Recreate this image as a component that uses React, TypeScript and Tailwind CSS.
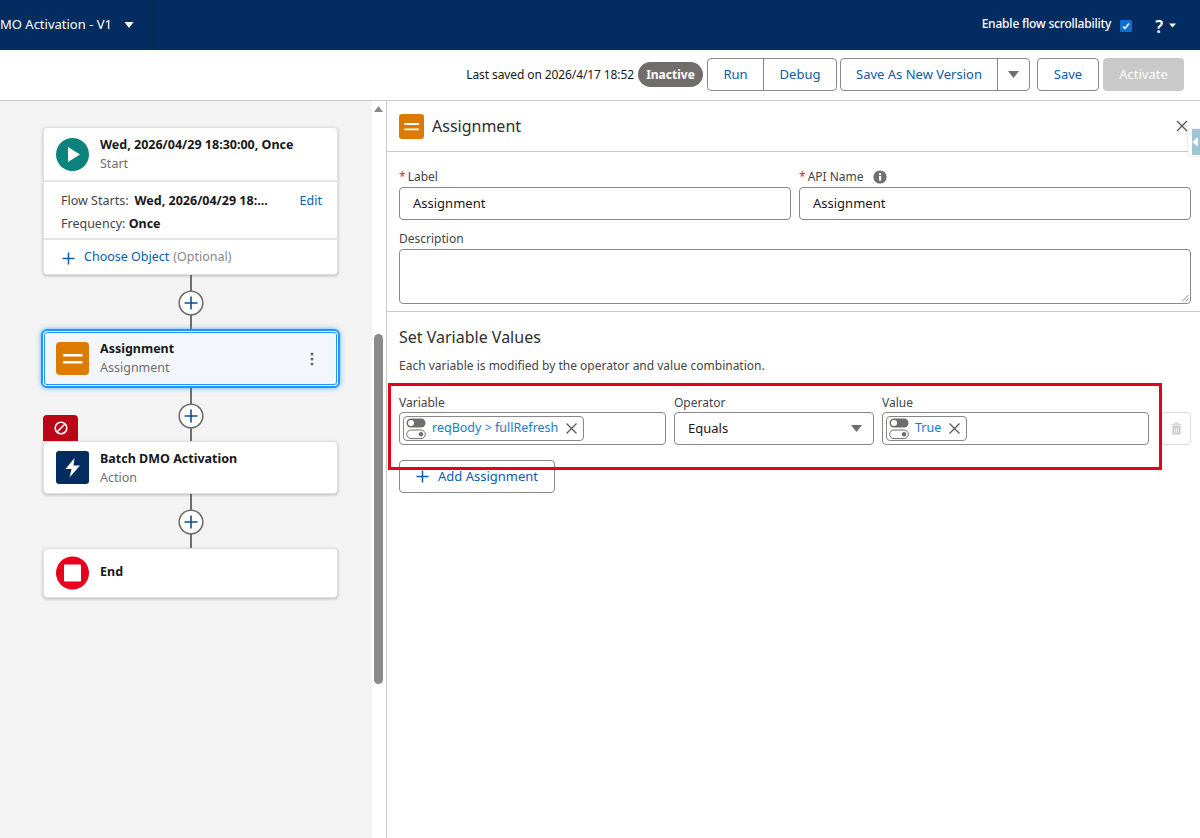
import React from "react";

const font = { fontFamily: '"Noto Sans", "Open Sans", sans-serif' };

function AssignIcon({ size = 33 }: { size?: number }) {
  return (
    <svg width={size} height={size} viewBox="0 0 33 33" className="shrink-0">
      <rect width="33" height="33" rx="4" fill="#dd7a01" />
      <rect x="7" y="12" width="19.5" height="2.6" rx="0.6" fill="#fff" />
      <rect x="7" y="19" width="19.5" height="2.6" rx="0.6" fill="#fff" />
    </svg>
  );
}

function PlusNode() {
  return (
    <div className="flex flex-col items-center w-[295px]">
      <div className="w-[2px] h-[16px] bg-[#706e6b]" />
      <svg width="26" height="26" viewBox="0 0 26 26" className="-my-[1px] shrink-0">
        <circle cx="13" cy="13" r="11.8" fill="#fff" stroke="#706e6b" strokeWidth="1.6" />
        <path d="M13 6.5v13M6.5 13h13" stroke="#0b4f8f" strokeWidth="1.6" />
      </svg>
      <div className="w-[2px] h-[14px] bg-[#706e6b]" />
    </div>
  );
}

function Toggle() {
  return (
    <svg width="20" height="22" viewBox="0 0 20 22" className="shrink-0">
      <rect x="0.5" y="0.5" width="19" height="9" rx="4.5" fill="#706e6b" />
      <circle cx="5" cy="5" r="3" fill="#fff" />
      <rect x="0.7" y="12" width="18.6" height="8.6" rx="4.3" fill="#fff" stroke="#706e6b" />
      <circle cx="15" cy="16.3" r="2.2" fill="#706e6b" />
    </svg>
  );
}

function Pill({ text }: { text: string }) {
  return (
    <div className="h-[25px] ml-[3px] flex items-center pl-[2px] pr-[5px] border border-[#8a8886] rounded-[4px] bg-white">
      <Toggle />
      <span className="ml-[6px] text-[12.5px] text-[#1b7bc4] whitespace-nowrap">{text}</span>
      <svg width="13" height="13" viewBox="0 0 13 13" className="ml-[7px]">
        <path d="M1.5 1.5l10 10M11.5 1.5l-10 10" stroke="#605e5c" strokeWidth="1.4" />
      </svg>
    </div>
  );
}

function Field({ label, required, info, cls }: { label: string; required?: boolean; info?: boolean; cls: string }) {
  return (
    <div className={cls}>
      <div className="h-[20px] flex items-center text-[12px] text-[#444]">
        {required && <span className="text-[#c23934] mr-[2px]">*</span>}
        {label}
        {info && (
          <svg width="14" height="14" viewBox="0 0 14 14" className="ml-[9px]">
            <circle cx="7" cy="7" r="6.6" fill="#706e6b" />
            <rect x="6" y="6" width="2.2" height="4.6" fill="#fff" />
            <rect x="6" y="3.2" width="2.2" height="1.9" fill="#fff" />
          </svg>
        )}
      </div>
      <div className="h-[33px] rounded-[4px] border border-[#8a8886] flex items-center pl-[13px] text-[13px] text-[#181818] bg-white">
        Assignment
      </div>
    </div>
  );
}

export default function App() {
  return (
    <div className="relative w-[1200px] h-[838px] overflow-hidden bg-white" style={font}>
      {/* Top bar */}
      <header className="h-[50px] bg-[#032d60] flex items-center text-white">
        <div className="w-[154px] h-full flex items-center justify-end border-r border-[#02234c] pr-[19px] overflow-hidden">
          <span className="text-[13px] whitespace-nowrap">MO Activation - V1</span>
          <svg width="12" height="8" viewBox="0 0 12 8" className="ml-[12px]">
            <path d="M0.5 0.5h11L6 7.5z" fill="#fff" />
          </svg>
        </div>
        <div className="flex-1" />
        <span className="text-[12px] font-medium whitespace-nowrap mb-[2px] tracking-[-0.2px]">Enable flow scrollability</span>
        <div className="ml-[9px] w-[12px] h-[12px] mt-[2px] bg-[#0d6fd1] rounded-[1px] flex items-center justify-center">
          <svg width="10" height="10" viewBox="0 0 10 10">
            <path d="M2 5.5l2 2 4-5" fill="none" stroke="#fff" strokeWidth="1.5" />
          </svg>
        </div>
        <span className="ml-[23px] text-[17px] font-semibold leading-none mt-[2px]">?</span>
        <svg width="7" height="5" viewBox="0 0 7 5" className="ml-[6px] mr-[24px]">
          <path d="M0 0.5h7L3.5 4.5z" fill="#fff" />
        </svg>
      </header>

      {/* Toolbar */}
      <div className="h-[51px] border-b border-[#c9c9c9] flex items-center justify-end pr-[16px] gap-[3px] pb-[1px]">
        <span className="text-[12px] text-[#181818] whitespace-nowrap mr-[1px] tracking-[-0.1px]">Last saved on 2026/4/17 18:52</span>
        <span className="h-[25px] w-[65px] rounded-full bg-[#706e6b] text-white text-[12px] font-bold flex items-center justify-center">Inactive</span>
        <div className="h-[33px] flex border border-[#8a8886] rounded-[4px] text-[13px] text-[#0b5cab] ml-[1px]">
          <span className="w-[56px] flex items-center justify-center border-r border-[#8a8886]">Run</span>
          <span className="w-[72px] flex items-center justify-center">Debug</span>
        </div>
        <div className="h-[33px] flex border border-[#8a8886] rounded-[4px] text-[13px] text-[#0b5cab] ml-[0px] mx-[2px]">
          <span className="w-[157px] flex items-center justify-center border-r border-[#8a8886]">Save As New Version</span>
          <span className="w-[31px] flex items-center justify-center">
            <svg width="11" height="7" viewBox="0 0 11 7"><path d="M0 0h11L5.500 7z" fill="#706e6b" /></svg>
          </span>
        </div>
        <span className="h-[33px] w-[62px] ml-[2px] border border-[#8a8886] rounded-[4px] text-[13px] text-[#0b5cab] flex items-center justify-center">Save</span>
        <span className="h-[33px] w-[81px] ml-[1px] rounded-[4px] bg-[#c9c9c9] text-[13px] text-white flex items-center justify-center">Activate</span>
      </div>

      <div className="flex h-[737px]">
        {/* Canvas */}
        <div className="w-[372px] bg-[#f3f3f3] pl-[43px] pt-[26px] shrink-0">
          <div className="w-[295px] h-[148px] bg-white rounded-[4px] border border-[#e0e0e0] shadow-[0_1px_3px_rgba(0,0,0,0.25)]">
            <div className="h-[54px] flex items-center pl-[12px] border-b-2 border-[#e5e5e5]">
              <svg width="33" height="33" viewBox="0 0 33 33" className="shrink-0">
                <circle cx="16.500" cy="16.500" r="16.500" fill="#0b827c" />
                <path d="M12 9l12 7.500-12 7.500z" fill="#fff" />
              </svg>
              <div className="ml-[11px]">
                <div className="text-[12.5px] font-bold text-[#181818] leading-[19px] whitespace-nowrap">Wed, 2026/04/29 18:30:00, Once</div>
                <div className="text-[12.500px] text-[#706e6b] leading-[19px]">Start</div>
              </div>
            </div>
            <div className="h-[58px] border-b-2 border-[#e5e5e5] pl-[17px] pr-[15px] pt-[8px] text-[12.5px] text-[#444]">
              <div className="flex leading-[22px] whitespace-nowrap">
                <span>Flow Starts:</span>
                <span className="ml-[6px] font-bold text-[#181818]">Wed, 2026/04/29 18:...</span>
                <span className="ml-auto text-[#0b5cab]">Edit</span>
              </div>
              <div className="leading-[23px] whitespace-nowrap">
                Frequency: <span className="font-bold text-[#181818]">Once</span>
              </div>
            </div>
            <div className="h-[34px] flex items-center pl-[18px] text-[12.5px]">
              <svg width="13" height="13" viewBox="0 0 13 13" className="mt-[2px]">
                <path d="M6.500 0.500v12M0.500 6.500h12" stroke="#0b5cab" strokeWidth="1.5" />
              </svg>
              <span className="ml-[9px] text-[#0b5cab]">Choose Object</span>
              <span className="ml-[4px] text-[#8a8886]">(Optional)</span>
            </div>
          </div>

          <PlusNode />

          <div className="w-[299px] -ml-[2px] h-[59px] rounded-[6px] border-2 border-[#1b96ff] p-[1px] shadow-[0_0_5px_rgba(27,150,255,0.7)] bg-white">
            <div className="h-full rounded-[3px] border border-[#1b96ff] bg-[#f3f6fb] flex items-center pl-[11px] pr-[22px]">
              <AssignIcon />
              <div className="ml-[11px] flex-1">
                <div className="text-[12.5px] font-bold text-[#181818] leading-[18px]">Assignment</div>
                <div className="text-[12.5px] text-[#706e6b] leading-[19px]">Assignment</div>
              </div>
              <svg width="4" height="14" viewBox="0 0 4 14">
                <circle cx="2" cy="2" r="1.500" fill="#706e6b" />
                <circle cx="2" cy="7" r="1.500" fill="#706e6b" />
                <circle cx="2" cy="12" r="1.500" fill="#706e6b" />
              </svg>
            </div>
          </div>

          <PlusNode />

          <div className="relative w-[295px] h-[53px] bg-white rounded-[4px] border border-[#e0e0e0] shadow-[0_1px_3px_rgba(0,0,0,0.25)] flex items-center pl-[12px] -mt-[1px]">
            <div className="absolute -top-[27px] -left-[1px] w-[35px] h-[26px] bg-[#ba0517] rounded-t-[4px] flex items-start justify-center pt-[6px]">
              <svg width="14" height="14" viewBox="0 0 14 14">
                <circle cx="7" cy="7" r="5.800" fill="none" stroke="#fff" strokeWidth="1.600" />
                <path d="M3 11L11 3" stroke="#fff" strokeWidth="1.600" />
              </svg>
            </div>
            <svg width="33" height="33" viewBox="0 0 33 33" className="shrink-0">
              <rect width="33" height="33" rx="3" fill="#032d60" />
              <path d="M18.500 7L9.500 18h6l-2 8.500L24 14.500h-6.500z" fill="#fff" />
            </svg>
            <div className="ml-[11px]">
              <div className="text-[12.5px] font-bold text-[#181818] leading-[19px]">Batch DMO Activation</div>
              <div className="text-[12.5px] text-[#706e6b] leading-[19px]">Action</div>
            </div>
          </div>

          <PlusNode />

          <div className="w-[295px] h-[50px] bg-white rounded-[4px] border border-[#e0e0e0] shadow-[0_1px_3px_rgba(0,0,0,0.25)] flex items-center pl-[12px]">
            <svg width="33" height="34" viewBox="0 0 33 34" className="shrink-0">
              <circle cx="16.500" cy="17" r="16.500" fill="#ea001e" />
              <rect x="8" y="8.500" width="17" height="17" rx="1" fill="#fff" />
            </svg>
            <span className="ml-[11px] mb-[2px] text-[12.5px] font-bold text-[#181818]">End</span>
          </div>
        </div>

        {/* Scrollbar */}
        <div className="w-[14px] shrink-0 bg-white flex flex-col items-center">
          <svg width="9" height="6" viewBox="0 0 9 6" className="mt-[5px] -ml-[1px] shrink-0">
            <path d="M4.500 0L9 6H0z" fill="#8a8a8a" />
          </svg>
          <div className="w-[9px] h-[350px] mt-[222px] -ml-[1px] rounded-full bg-[#8a8a8a]" />
        </div>

        {/* Panel */}
        <div className="flex-1 border-l border-[#c9c9c9] min-w-0">
          <div className="h-[51px] border-b border-[#c9c9c9] flex items-center pl-[12px] pr-[12px]">
            <AssignIcon size={25} />
            <span className="ml-[8px] text-[16px] text-[#2e2e2e]">Assignment</span>
            <svg width="12" height="12" viewBox="0 0 12 12" className="ml-auto">
              <path d="M1 1l10 10M11 1L1 11" stroke="#555" strokeWidth="1.300" />
            </svg>
          </div>
          <div className="relative">
            <div className="absolute -top-[23px] right-0 w-[12px] h-[27px] bg-white rounded-l-[3px] shadow-[0_0_2px_rgba(0,0,0,0.25)] flex justify-end">
              <div className="w-[8px] h-[26px] bg-[#9fc4d4] flex items-center">
                <div className="w-0 h-0 border-y-[5px] border-y-transparent border-r-[6px] border-r-white" />
              </div>
            </div>
          </div>
          <div className="px-[12px] pr-[9px] border-b border-[#c9c9c9] h-[160px]">
            <div className="flex gap-[8px] pt-[15px]">
              <Field label="Label" required cls="w-[392px]" />
              <Field label="API Name" required info cls="w-[392px]" />
            </div>
            <div className="h-[20px] mt-[9px] flex items-center text-[12px] text-[#444]">Description</div>
            <div className="relative h-[55px] w-[792px] rounded-[4px] border border-[#8a8886]">
              <svg width="8" height="8" viewBox="0 0 8 8" className="absolute right-[1px] bottom-[1px]">
                <path d="M1 7.500L7.500 1M4.500 7.500L7.500 4.500" stroke="#706e6b" strokeWidth="0.800" />
              </svg>
            </div>
          </div>
          <div className="pl-[12px]">
            <div className="mt-[13px] text-[16px] leading-[24px] text-[#2e2e2e]">Set Variable Values</div>
            <div className="mt-[8px] text-[12px] leading-[18px] text-[#444]">Each variable is modified by the operator and value combination.</div>
            <div className="mt-[19px] flex gap-[8px] items-end">
              <div className="w-[267px]">
                <div className="h-[18px] text-[12px] text-[#444] leading-[18px]">Variable</div>
                <div className="h-[33px] rounded-[4px] border border-[#8a8886] flex items-center">
                  <Pill text="reqBody > fullRefresh" />
                </div>
              </div>
              <div className="w-[200px]">
                <div className="h-[18px] text-[12px] text-[#444] leading-[18px]">Operator</div>
                <div className="h-[33px] rounded-[4px] border border-[#8a8886] flex items-center justify-between pl-[13px] pr-[11px] text-[13px] text-[#181818]">
                  Equals
                  <svg width="11" height="7" viewBox="0 0 11 7"><path d="M0 0h11L5.500 7z" fill="#706e6b" /></svg>
                </div>
              </div>
              <div className="w-[267px]">
                <div className="h-[18px] text-[12px] text-[#444] leading-[18px]">Value</div>
                <div className="h-[33px] rounded-[4px] border border-[#8a8886] flex items-center">
                  <Pill text="True" />
                </div>
              </div>
              <div className="w-[30px] h-[33px] ml-[4px] rounded-[4px] border border-[#dcdcdc] flex items-center justify-center">
                <svg width="11" height="13" viewBox="0 0 11 13">
                  <path d="M0.500 2.800h10M3.800 2.800V1h3.400v1.800" fill="none" stroke="#c9c9c9" strokeWidth="1" />
                  <path d="M1.500 4h8v8.500h-8z" fill="#c9c9c9" />
                  <path d="M3.700 5.500v5.500M5.500 5.500v5.500M7.300 5.500v5.500" stroke="#fff" strokeWidth="0.700" />
                </svg>
              </div>
            </div>
            <div className="mt-[15px] w-[156px] h-[33px] rounded-[4px] border border-[#8a8886] flex items-center justify-center text-[13px] text-[#0b5cab]">
              <svg width="13" height="13" viewBox="0 0 13 13" className="mr-[9px]">
                <path d="M6.500 0.500v12M0.500 6.500h12" stroke="#0b5cab" strokeWidth="1.500" />
              </svg>
              Add Assignment
            </div>
          </div>
        </div>
      </div>

      {/* Annotation rectangle */}
      <div className="absolute left-[388px] top-[383px] w-[774px] h-[87px] border-[3px] border-[#e2001a] pointer-events-none" />
    </div>
  );
}
